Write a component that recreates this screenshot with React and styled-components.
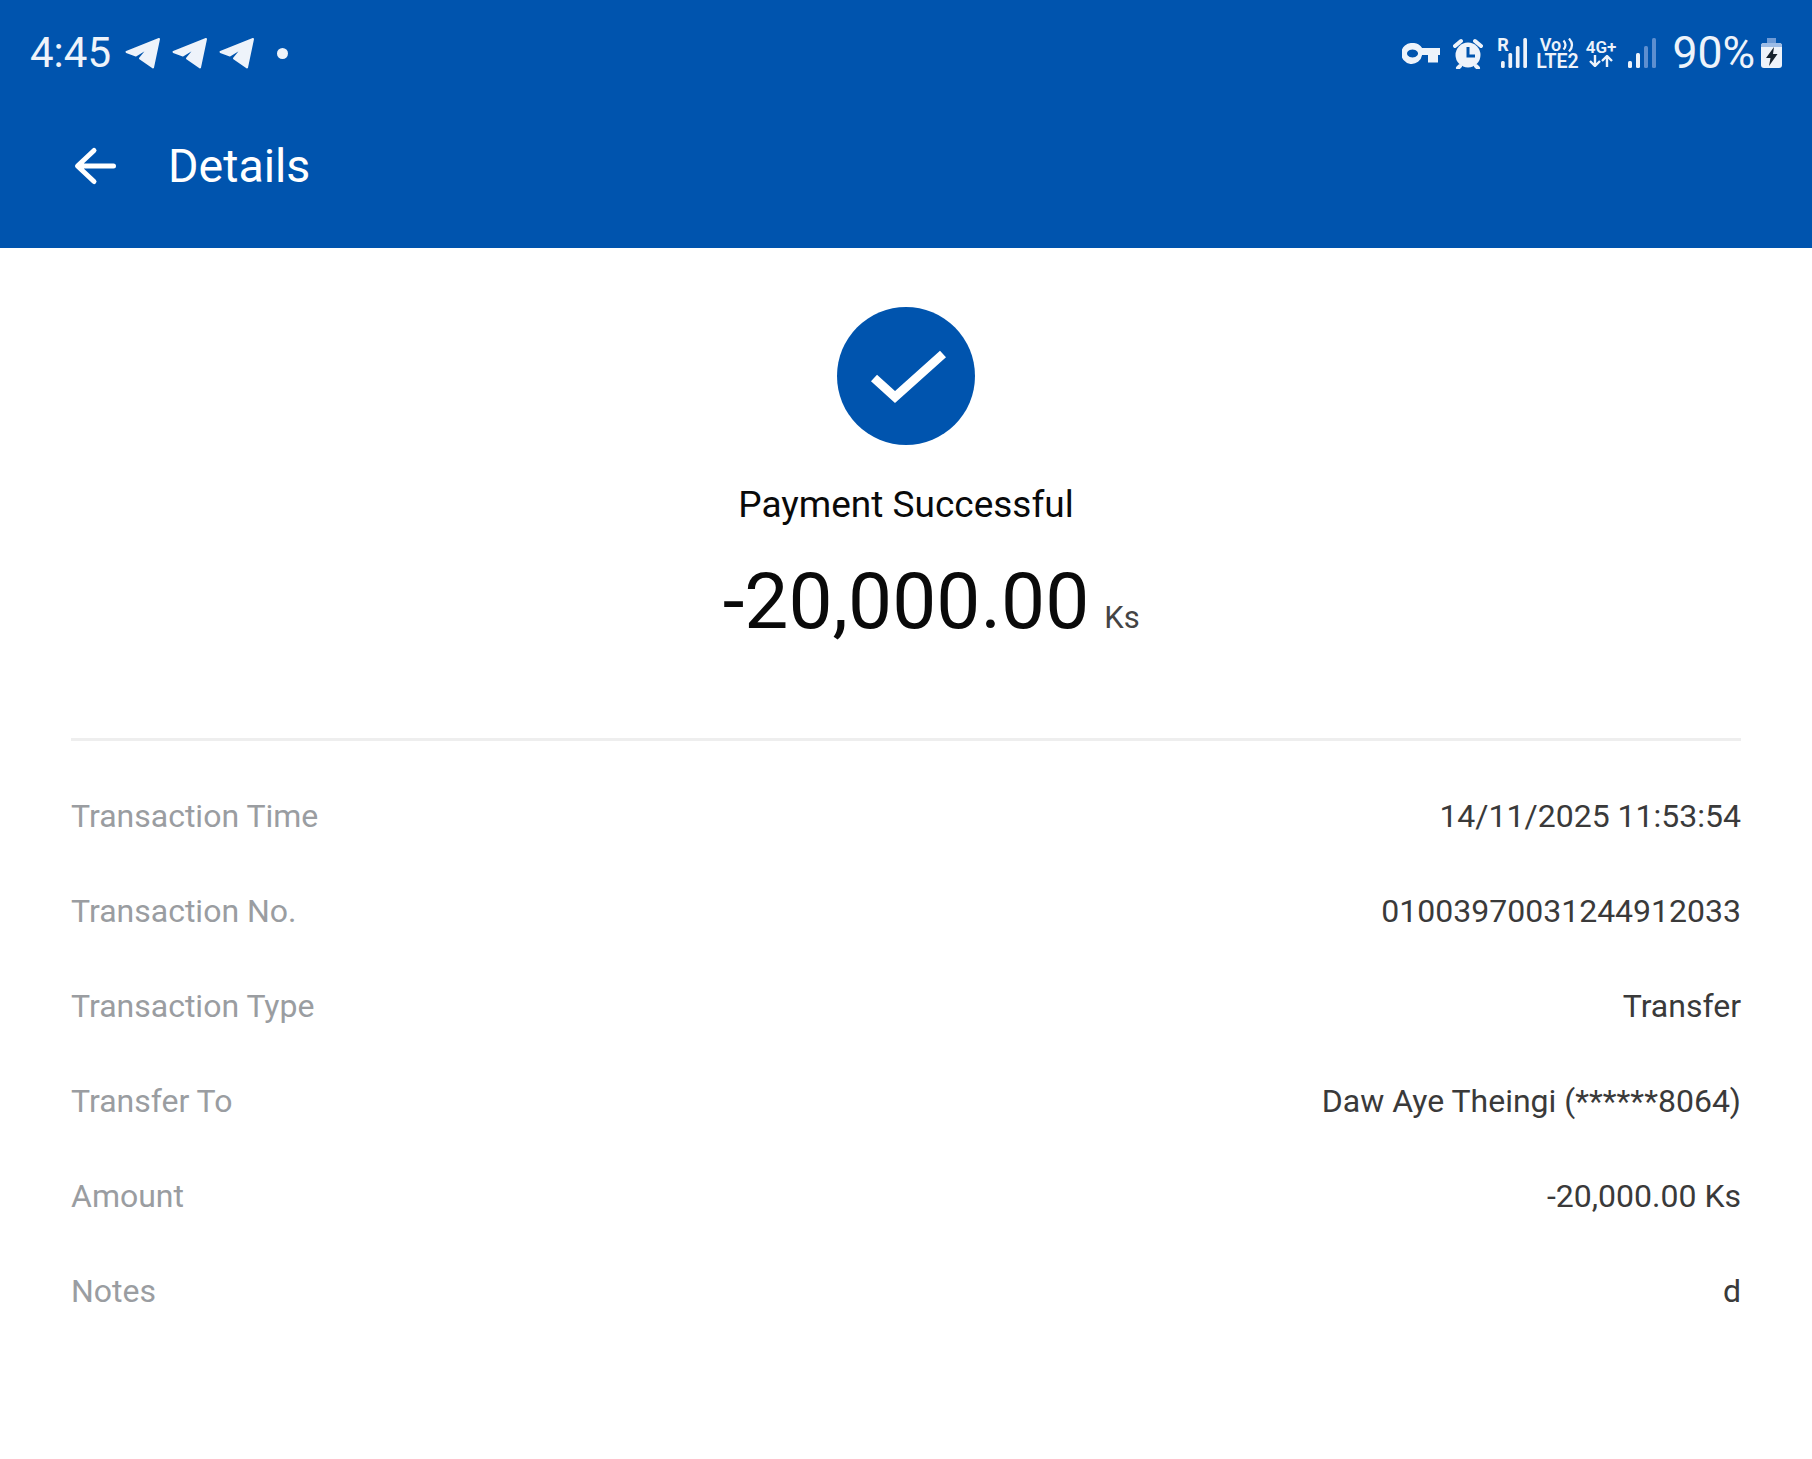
import React from 'react';
import styled, {createGlobalStyle} from 'styled-components';

const BLUE = '#0054ae';

const Global = createGlobalStyle`
html, body {
    margin: 0;
    background: #fff;
    font-family: Roboto, "Liberation Sans", sans-serif;
}
`

const Page = styled.div`
width: 1812px;
height: 1459px;
background: #fff;
overflow: hidden;
`

const Header = styled.header`
height: 248px;
background: ${BLUE};
color: #eef3fa;
`

const StatusBar = styled.div`
height: 104px;
padding: 2px 30px 0 30px;
box-sizing: border-box;
display: flex;
align-items: center;
justify-content: space-between;
`

const StatusGroup = styled.div`
display: flex;
align-items: center;
`

const Clock = styled.span`
font-size: 42px;
font-weight: 400;
line-height: 1;
margin-right: 13px;
`

const Plane = styled.svg`
width: 37px;
height: 32px;
margin-right: 10px;
`

const Dot = styled.span`
width: 11px;
height: 11px;
border-radius: 50%;
background: #eef3fa;
margin-left: 12px;
`

const Glyph = styled.svg`
display: block;
flex: none;
margin-right: ${p => p.$gap || 0}px;
`

const NetStack = styled.div`
display: flex;
flex-direction: column;
align-items: center;
font-weight: 600;
line-height: ${p => p.$line || 16}px;
margin-right: ${p => p.$gap || 0}px;
`

const NetLine = styled.span`
display: flex;
align-items: center;
gap: 1px;
font-size: ${p => p.$size}px;
`

const RoamSignal = styled.div`
position: relative;
margin-right: 9px;
`

const RoamMark = styled.span`
position: absolute;
left: -4px;
top: -2px;
font-size: 18px;
font-weight: 700;
line-height: 17px;
`

const Battery = styled.span`
font-size: 44.5px;
font-weight: 400;
line-height: 1;
margin-right: 6px;
`

const NavRow = styled.div`
height: 144px;
padding: 0 0 20px 72px;
box-sizing: border-box;
display: flex;
align-items: center;
`

const BackIcon = styled.svg`
width: 46px;
height: 40px;
margin-right: 50px;
`

const NavTitle = styled.h1`
margin: 0;
font-size: 46.5px;
font-weight: 400;
color: #fff;
`

const Summary = styled.section`
padding-top: 59px;
display: flex;
flex-direction: column;
align-items: center;
`

const CheckCircle = styled.div`
width: 138px;
height: 138px;
border-radius: 50%;
background: ${BLUE};
`

const Status = styled.div`
margin-top: 38px;
font-size: 37px;
line-height: 44px;
color: #0a0a0a;
`

const AmountRow = styled.div`
margin-top: 28px;
width: 100%;
display: grid;
grid-template-columns: 1fr auto 1fr;
align-items: baseline;
column-gap: 15px;
`

const Amount = styled.div`
grid-column: 2;
font-size: 78.5px;
line-height: 92px;
color: #0a0a0a;
`

const Currency = styled.div`
font-size: 31px;
color: #444;
`

const Divider = styled.hr`
margin: 91px 71px 27px;
border: 0;
height: 3px;
background: #eeeeee;
`

const Rows = styled.div`
padding: 0 71px;
`

const Row = styled.div`
height: 95px;
display: flex;
align-items: center;
justify-content: space-between;
font-size: 32px;
`

const Label = styled.span`
color: #9a9da1;
`

const Value = styled.span`
color: #3a3a3a;
`

const rows = [
    ['Transaction Time', '14/11/2025 11:53:54'],
    ['Transaction No.', '01003970031244912033'],
    ['Transaction Type', 'Transfer'],
    ['Transfer To', 'Daw Aye Theingi (******8064)'],
    ['Amount', '-20,000.00 Ks'],
    ['Notes', 'd'],
];

const PlaneIcon = () => (
    <Plane viewBox="0 0 37 32">
        <path d="M35 2 L2.5 15 L12 18.5 L25 10.5 L16 21.5 L29 30.5 Z"
              fill="#eef3fa" stroke="#eef3fa" strokeWidth="2" strokeLinejoin="round"/>
    </Plane>
);

const Bars = ({dim, width, gap}) => (
    <Glyph width={width} height="30" viewBox="0 0 28 30" preserveAspectRatio="none" $gap={gap}>
        <rect x="0" y="23" width="4" height="7" rx="1.5" fill="#eef3fa"/>
        <rect x="8" y="15" width="4" height="15" rx="1.5" fill="#eef3fa"/>
        <rect x="16" y="8" width="4" height="22" rx="1.5" fill={dim ? '#5d8fd0' : '#eef3fa'}/>
        <rect x="24" y="0" width="4" height="30" rx="1.5" fill={dim ? '#5d8fd0' : '#eef3fa'}/>
    </Glyph>
);

function App() {
    return (
        <Page>
            <Global/>
            <Header>
                <StatusBar>
                    <StatusGroup>
                        <Clock>4:45</Clock>
                        <PlaneIcon/>
                        <PlaneIcon/>
                        <PlaneIcon/>
                        <Dot/>
                    </StatusGroup>
                    <StatusGroup>
                        <Glyph width="38" height="21" viewBox="0 0 38 21" $gap={13}>
                            <path fillRule="evenodd" fill="#eef3fa"
                                  d="M10.5 0 a10.5 10.5 0 0 1 9.6 5 H38 V12 H36 V19.5 H26 V12 H20.1 A10.5 10.5 0 1 1 10.5 0 Z M10.5 6.5 a5.5 4 0 1 0 0.01 0 Z"/>
                        </Glyph>
                        <Glyph width="30" height="31" viewBox="0 0 30 31" $gap={18} stroke="#eef3fa" fill="none">
                            <circle cx="15" cy="17" r="12.5" fill="#eef3fa" stroke="none"/>
                            <path d="M15 9 V18 H22" stroke={BLUE} strokeWidth="3"/>
                            <path d="M2 8 L8 3 M28 8 L22 3 M7 28 L5 30 M23 28 L25 30" strokeWidth="4" strokeLinecap="round"/>
                        </Glyph>
                        <RoamSignal>
                            <RoamMark>R</RoamMark>
                            <Bars width="26"/>
                        </RoamSignal>
                        <NetStack $line={17} $gap={7}>
                            <NetLine $size={18}>
                                Vo
                                <Glyph width="13" height="14" viewBox="0 0 13 14" fill="none" stroke="#eef3fa" strokeWidth="2.2">
                                    <path d="M1.5 2.5 Q5.5 7 1.5 11.5 M7 0.5 Q13 7 7 13.5"/>
                                </Glyph>
                            </NetLine>
                            <NetLine $size={19.5}>LTE2</NetLine>
                        </NetStack>
                        <NetStack $line={15} $gap={12}>
                            <NetLine $size={17}>4G+</NetLine>
                            <Glyph width="24" height="12" viewBox="0 0 24 12" fill="none" stroke="#eef3fa" strokeWidth="2.4">
                                <path d="M6 0 V11 M1 6 L6 11 L11 6 M18 12 V1 M13 6 L18 1 L23 6"/>
                            </Glyph>
                        </NetStack>
                        <Bars dim width="28" gap={16}/>
                        <Battery>90%</Battery>
                        <Glyph width="21" height="30" viewBox="0 0 21 30">
                            <path d="M6 0 H15 V5 H6 Z" fill="#6f9bd6"/>
                            <rect x="0" y="5" width="21" height="25" rx="3" fill="#eef3fa"/>
                            <path d="M0 8 a3 3 0 0 1 3 -3 H18 a3 3 0 0 1 3 3 V9 H0 Z" fill="#9dbce6"/>
                            <path d="M13 9 L5 20 H9.5 L8 28 L16.5 16 H12 Z" fill="#16222e"/>
                        </Glyph>
                    </StatusGroup>
                </StatusBar>
                <NavRow>
                    <BackIcon viewBox="0 0 46 40" fill="none" stroke="#fff" strokeWidth="5" strokeLinecap="round" strokeLinejoin="round">
                        <path d="M41.5 20 H6 M22 4.5 L5.5 20 L22 35.5"/>
                    </BackIcon>
                    <NavTitle>Details</NavTitle>
                </NavRow>
            </Header>
            <Summary>
                <CheckCircle>
                    <svg width="138" height="138" viewBox="0 0 138 138" fill="none">
                        <path d="M37 71 L58 90 L106 47" stroke="#fff" strokeWidth="9"/>
                    </svg>
                </CheckCircle>
                <Status>Payment Successful</Status>
                <AmountRow>
                    <Amount>-20,000.00</Amount>
                    <Currency>Ks</Currency>
                </AmountRow>
            </Summary>
            <Divider/>
            <Rows>
                {rows.map(([label, value]) => (
                    <Row key={label}>
                        <Label>{label}</Label>
                        <Value>{value}</Value>
                    </Row>
                ))}
            </Rows>
        </Page>
    );
}

export default App;
